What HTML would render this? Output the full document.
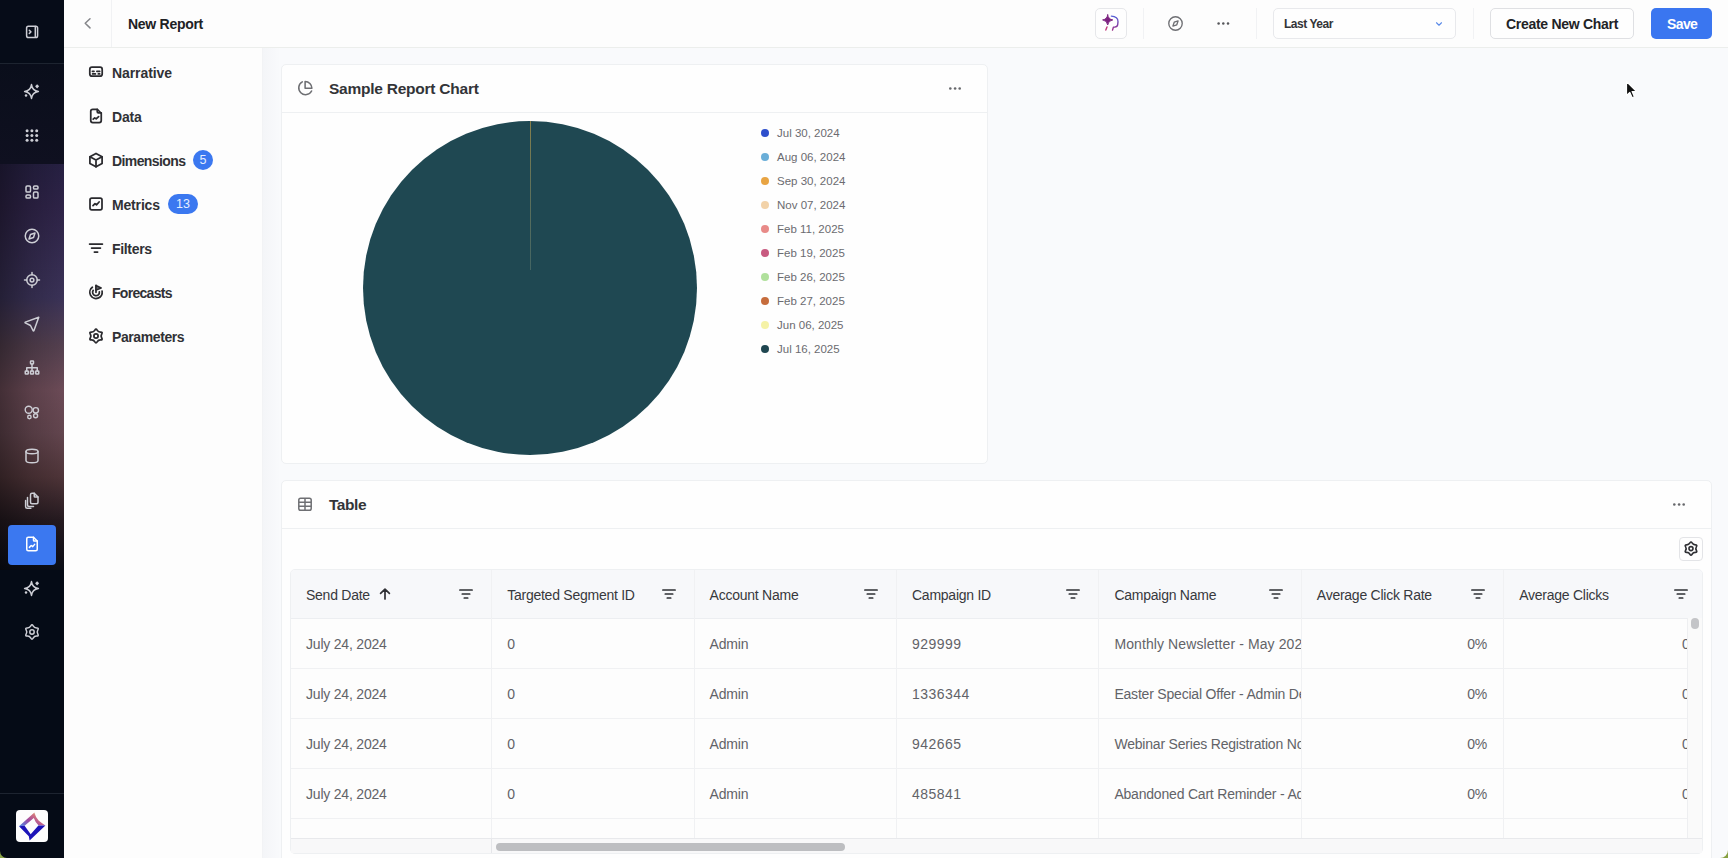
<!DOCTYPE html>
<html><head><meta charset="utf-8">
<style>
*{box-sizing:border-box;margin:0;padding:0}
html,body{width:1728px;height:858px;overflow:hidden}
body{position:relative;background:#f9fafc;font-family:"Liberation Sans",sans-serif;color:#222}
.abs{position:absolute}
svg{position:absolute;overflow:visible}
.sb{left:0;top:0;width:64px;height:858px;background:#050b16;overflow:hidden}
.sbi{fill:none;stroke:#cdced5;stroke-width:2;stroke-linecap:round;stroke-linejoin:round}
.pi{fill:none;stroke:#2a2a2e;stroke-width:1.75;stroke-linecap:round;stroke-linejoin:round}
.top{left:64px;top:0;width:1664px;height:48px;background:#fdfdfd;border-bottom:1px solid #eceeec}
.panel{left:64px;top:48px;width:199px;height:810px;background:#fdfdfd;border-right:1px solid #f2f3f5}
.item{position:absolute;left:48px;font-size:14px;font-weight:700;color:#303135;letter-spacing:-0.2px;white-space:nowrap}
.badge{position:absolute;height:20px;border-radius:10px;background:#3b78f0;color:#e6eeff;font-size:12.5px;text-align:center;line-height:20px}
.card{background:#fefefe;border:1px solid #eef0f2;border-radius:5px}
.t{position:absolute;white-space:nowrap}
.leg{position:absolute;left:777px;font-size:11.5px;color:#6b6b70;white-space:nowrap;letter-spacing:0px}
.dot{position:absolute;left:761px;width:8px;height:8px;border-radius:50%}
.hd{position:absolute;top:587px;font-size:14px;color:#38393d;white-space:nowrap;letter-spacing:-0.25px}
.cell{position:absolute;font-size:14px;color:#626368;white-space:nowrap;letter-spacing:-0.2px}
.fic{fill:none;stroke:#2f3034;stroke-width:1.7;stroke-linecap:round}
</style></head><body>

<!-- SIDEBAR -->
<div class="abs sb">
  <div class="abs" style="left:0;top:0;width:64px;height:63px;background:#060c18"></div>
  <div class="abs" style="left:0;top:63px;width:64px;height:1px;background:#1d2430"></div>
  <div class="abs" style="left:0;top:64px;width:64px;height:100px;background:linear-gradient(180deg,#0a0e1b,#0f1020)"></div>
  <div class="abs" style="left:0;top:164px;width:64px;height:406px;background:linear-gradient(90deg,rgba(0,0,0,0.38),rgba(0,0,0,0.15) 50%,rgba(0,0,0,0) 100%),linear-gradient(180deg,#262042 0%,#2e2347 10.6%,#3a3257 32.8%,#54404f 44.8%,#6c4b57 55.7%,#62454e 66.5%,#4e3438 77.1%,#251a20 87.7%,#0a0d16 100%)"></div>
  <div class="abs" style="left:0;top:793px;width:64px;height:1px;background:#1d2430"></div>

  <!-- sidebar icons -->
  <svg class="sbi" style="left:20px;top:20px;stroke-width:1.5" width="24" height="24" viewBox="20 20 24 24"><rect x="26.6" y="26.3" width="11" height="11.2" rx="1.8"/><path d="M35.3 26.5v10.8"/><path d="M29.3 30.3l1.6 1.6l-1.6 1.6"/></svg>
  <svg style="left:20px;top:80px" width="24" height="24" viewBox="20 80 24 24"><path d="M31.5 84.6 Q32.3 90.7 38.4 91.5 Q32.3 92.3 31.5 98.4 Q30.7 92.3 24.6 91.5 Q30.7 90.7 31.5 84.6Z" fill="none" stroke="#cdced5" stroke-width="1.5" stroke-linejoin="round"/><path d="M37.1 84.2 L39.1 86.3 L37.1 88.4 L35.1 86.3Z" fill="#cdced5"/><circle cx="26" cy="95.4" r="1.25" fill="#cdced5"/></svg>
  <svg style="left:20px;top:124px" width="24" height="24" viewBox="20 124 24 24" fill="#cdced5"><circle cx="27.1" cy="130.8" r="1.5"/><circle cx="31.9" cy="130.8" r="1.5"/><circle cx="36.7" cy="130.8" r="1.5"/><circle cx="27.1" cy="135.5" r="1.5"/><circle cx="31.9" cy="135.5" r="1.5"/><circle cx="36.7" cy="135.5" r="1.5"/><circle cx="27.1" cy="140.3" r="1.5"/><circle cx="31.9" cy="140.3" r="1.5"/><circle cx="36.7" cy="140.3" r="1.5"/></svg>
  <svg class="sbi" style="left:23px;top:183px" width="18" height="18" viewBox="0 0 24 24"><rect x="4" y="4" width="6" height="8" rx="1.5"/><rect x="4" y="16" width="6" height="4" rx="1.5"/><rect x="14" y="12" width="6" height="8" rx="1.5"/><rect x="14" y="4" width="6" height="4" rx="1.5"/></svg>
  <svg class="sbi" style="left:23px;top:227px" width="18" height="18" viewBox="0 0 24 24"><circle cx="12" cy="12" r="9"/><path d="M8 16l2 -6l6 -2l-2 6z"/></svg>
  <svg class="sbi" style="left:23px;top:271px" width="18" height="18" viewBox="0 0 24 24"><circle cx="12" cy="12" r="2.5"/><circle cx="12" cy="12" r="7"/><path d="M12 2v3M12 19v3M2 12h3M19 12h3"/></svg>
  <svg class="sbi" style="left:23px;top:315px" width="18" height="18" viewBox="0 0 24 24"><path d="M21 3l-6.5 18a.55 .55 0 0 1 -1 0l-3.5 -7l-7 -3.5a.55 .55 0 0 1 0 -1z"/></svg>
  <svg class="sbi" style="left:23px;top:359px" width="18" height="18" viewBox="0 0 24 24"><rect x="10" y="2.5" width="4" height="4" rx="0.8"/><rect x="3" y="16" width="4" height="4" rx="0.8"/><rect x="10" y="16" width="4" height="4" rx="0.8"/><rect x="17" y="16" width="4" height="4" rx="0.8"/><path d="M12 6.5v5M5 16v-4.5h14v4.5M12 11.5v4.5"/></svg>
  <svg class="sbi" style="left:20px;top:400px;stroke-width:1.4" width="24" height="24" viewBox="20 400 24 24"><circle cx="28.7" cy="409.8" r="3.5"/><circle cx="35.8" cy="410.3" r="2.7"/><circle cx="29.4" cy="417" r="1.7"/><circle cx="35.6" cy="415.8" r="2"/></svg>
  <svg class="sbi" style="left:23px;top:447px" width="18" height="18" viewBox="0 0 24 24"><ellipse cx="12" cy="6" rx="8" ry="3"/><path d="M4 6v12a8 3 0 0 0 16 0v-12"/></svg>
  <svg class="sbi" style="left:23px;top:491px" width="18" height="18" viewBox="0 0 24 24"><path d="M15 3v4a1 1 0 0 0 1 1h4"/><path d="M18 17h-6a2 2 0 0 1 -2 -2v-10a2 2 0 0 1 2 -2h3l5 5v7a2 2 0 0 1 -2 2z"/><path d="M14 20.5h-6a2 2 0 0 1 -2 -2v-10"/><path d="M10.5 23h-5a2 2 0 0 1 -2 -2v-8.5"/></svg>
  <div class="abs" style="left:8px;top:525px;width:48px;height:40px;background:#3b78f0;border-radius:4px"></div>
  <svg class="sbi" style="left:23px;top:535px;stroke:#fff" width="18" height="18" viewBox="0 0 24 24"><path d="M14 3v4a1 1 0 0 0 1 1h4"/><path d="M17 21h-10a2 2 0 0 1 -2 -2v-14a2 2 0 0 1 2 -2h7l5 5v11a2 2 0 0 1 -2 2z"/><path d="M8.5 16.5l2.5 -2.5l2 1.5l2.5 -3"/></svg>
  <svg style="left:20px;top:577px" width="24" height="24" viewBox="20 80 24 24"><path d="M31.5 84.6 Q32.3 90.7 38.4 91.5 Q32.3 92.3 31.5 98.4 Q30.7 92.3 24.6 91.5 Q30.7 90.7 31.5 84.6Z" fill="none" stroke="#cdced5" stroke-width="1.5" stroke-linejoin="round"/><path d="M37.1 84.2 L39.1 86.3 L37.1 88.4 L35.1 86.3Z" fill="#cdced5"/><circle cx="26" cy="95.4" r="1.25" fill="#cdced5"/></svg>
  <svg class="sbi" style="left:20px;top:620px;stroke-width:1.5" width="24" height="24" viewBox="20 620 24 24"><path d="M30.85 625.91 Q32.00 623.80 33.15 625.91 Q34.30 628.02 36.70 627.96 Q39.10 627.90 37.85 629.95 Q36.60 632.00 37.85 634.05 Q39.10 636.10 36.70 636.04 Q34.30 635.98 33.15 638.09 Q32.00 640.20 30.85 638.09 Q29.70 635.98 27.30 636.04 Q24.90 636.10 26.15 634.05 Q27.40 632.00 26.15 629.95 Q24.90 627.90 27.30 627.96 Q29.70 628.02 30.85 625.91Z"/><circle cx="32" cy="632" r="2.2"/></svg>
  <!-- logo -->
  <div class="abs" style="left:16px;top:810px;width:32px;height:32px;background:#fdfdfd;border-radius:4px"></div>
  <svg style="left:16px;top:810px" width="32" height="32" viewBox="0 0 32 32">
    <defs><linearGradient id="lg1" x1="0" y1="1" x2="1" y2="0.3"><stop offset="0" stop-color="#4a8ae8"/><stop offset="0.45" stop-color="#a04aa0"/><stop offset="0.75" stop-color="#d07080"/><stop offset="1" stop-color="#e8f080"/></linearGradient></defs>
    <path d="M3 16.2 L18.4 2.4 Q19.6 7.2 22.6 10.6 Q25.6 13.2 29.4 15.4 L22.4 15.2 Q19.4 12.4 17.8 7.9 L8.6 15.8 Z" fill="url(#lg1)"/>
    <path d="M3 16.2 L8.6 15.8 L14.7 24.2 L22.4 15.4 L29.4 15.6 L13.6 30.4 L12.8 26.2 Z" fill="#1c14b8"/>
  </svg>
</div>

<!-- TOP BAR -->
<div class="abs top"></div>
<div class="abs" style="left:111px;top:0;width:1px;height:47px;background:#f1f2f4"></div>
<svg style="left:80px;top:14px" width="16" height="18" viewBox="80 14 16 18" fill="none" stroke="#85868a" stroke-width="1.5" stroke-linecap="round" stroke-linejoin="round"><path d="M90 18.7L85.2 23.3L90 27.9"/></svg>
<div class="t" style="left:128px;top:16px;font-size:14px;font-weight:700;color:#202124;letter-spacing:-0.28px">New Report</div>
<!-- magic button -->
<div class="abs" style="left:1095px;top:8px;width:32px;height:31px;border:1px solid #e6e7ea;border-radius:5px;background:#fefefe"></div>
<svg style="left:1095px;top:8px" width="32" height="31" viewBox="1095 8 32 31" fill="none" stroke-linecap="round" stroke-linejoin="round">
  <defs><linearGradient id="hg" x1="0" y1="0" x2="0" y2="1"><stop offset="0" stop-color="#5560d8"/><stop offset="1" stop-color="#9a2f8a"/></linearGradient></defs>
  <path d="M1107.7 14.8 Q1108.3 19.3 1112.8 19.9 Q1108.3 20.5 1107.7 25 Q1107.1 20.5 1102.6 19.9 Q1107.1 19.3 1107.7 14.8Z" fill="#7c2280" stroke="#7c2280" stroke-width="0.9"/>
  <path d="M1111.4 16.1 C1115.6 16.2 1118.3 18.6 1118 21.6 L1117.7 24.6 Q1117.4 26.9 1114.6 27.1 L1113.4 27.3 L1112.5 30.1" stroke="url(#hg)" stroke-width="1.4"/>
  <path d="M1107 26.9 L1105.8 30.1" stroke="#c23a7c" stroke-width="1.4"/>
</svg>
<div class="abs" style="left:1143px;top:8px;width:1px;height:31px;background:#f1f2f4"></div>
<svg style="left:1167px;top:15px" width="17" height="17" viewBox="0 0 24 24" fill="none" stroke="#6e6f73" stroke-width="1.9" stroke-linecap="round" stroke-linejoin="round"><circle cx="12" cy="12" r="9.5"/><path d="M8.3 15.7l1.9 -5.5l5.5 -1.9l-1.9 5.5z"/></svg>
<svg style="left:1216px;top:21px" width="15" height="5" viewBox="0 0 15 5" fill="#55565a"><circle cx="2.6" cy="2.5" r="1.25"/><circle cx="7.3" cy="2.5" r="1.25"/><circle cx="12" cy="2.5" r="1.25"/></svg>
<div class="abs" style="left:1256px;top:8px;width:1px;height:31px;background:#f1f2f4"></div>
<!-- dropdown -->
<div class="abs" style="left:1273px;top:8px;width:183px;height:31px;border:1px solid #e8e9ec;border-radius:5px;background:#fefefe"></div>
<div class="t" style="left:1284px;top:17px;font-size:12px;font-weight:700;color:#333438;letter-spacing:-0.46px">Last Year</div>
<svg style="left:1434px;top:19px" width="10" height="10" viewBox="0 0 24 24" fill="none" stroke="#5a8ae8" stroke-width="2.6" stroke-linecap="round" stroke-linejoin="round"><path d="M6 9l6 6l6 -6"/></svg>
<div class="abs" style="left:1473px;top:8px;width:1px;height:31px;background:#f1f2f4"></div>
<!-- buttons -->
<div class="abs" style="left:1490px;top:8px;width:144px;height:31px;border:1px solid #dfe0e3;border-radius:5px;background:#fefefe"></div>
<div class="t" style="left:1506px;top:16px;font-size:14px;font-weight:700;color:#222326;letter-spacing:-0.29px">Create New Chart</div>
<div class="abs" style="left:1651px;top:8px;width:61px;height:31px;border-radius:5px;background:#3a76f0"></div>
<div class="t" style="left:1667px;top:16px;font-size:14px;font-weight:700;color:#fff;letter-spacing:-0.6px">Save</div>

<!-- LEFT PANEL -->
<div class="abs panel">
  <svg class="pi" style="left:22px;top:12px" width="20" height="24" viewBox="86 60 20 24"><rect x="89.8" y="67.2" width="12.4" height="9" rx="2.2"/><path d="M92.4 71.3h1.6M96.9 71.3h2.8M92.6 73.9h2.8M98.3 73.9h1.4"/></svg>
  <div class="item" style="top:17px;letter-spacing:-0.09px">Narrative</div>
  <svg class="pi" style="left:22px;top:56px" width="20" height="24" viewBox="86 104 20 24"><path d="M90.75 111.25a2 2 0 0 1 2 -2h4.5l4 4v7.25a2 2 0 0 1 -2 2h-6.5a2 2 0 0 1 -2 -2z"/><path d="M97.25 109.25v2.5a1 1 0 0 0 1 1h3"/><path d="M93.2 119.2l1.5 -1.3l1.5 0.9l2.4 -2.1"/></svg>
  <div class="item" style="top:61px;letter-spacing:-0.17px">Data</div>
  <svg class="pi" style="left:22px;top:100px" width="20" height="24" viewBox="86 148 20 24"><path d="M96 153.4l6.1 3.4v6.6l-6.1 3.4l-6.1 -3.4v-6.6z"/><path d="M96 160.1l6.1 -3.3M96 160.1v6.7M96 160.1l-6.1 -3.3"/></svg>
  <div class="item" style="top:105px;letter-spacing:-0.6px">Dimensions</div>
  <div class="badge" style="left:129px;top:102px;width:20px">5</div>
  <svg class="pi" style="left:22px;top:144px" width="20" height="24" viewBox="86 192 20 24"><rect x="90" y="198" width="12" height="11.8" rx="1.8"/><path d="M93 205.6l2 -2l1.5 1.2l2.6 -2.8"/></svg>
  <div class="item" style="top:149px;letter-spacing:-0.17px">Metrics</div>
  <div class="badge" style="left:104px;top:146px;width:30px">13</div>
  <svg class="pi" style="left:22px;top:188px" width="20" height="24" viewBox="86 236 20 24"><path d="M89.6 244h12.8M91.6 248h8.8M94.4 252h3.2"/></svg>
  <div class="item" style="top:193px;letter-spacing:-0.33px">Filters</div>
  <svg class="pi" style="left:22px;top:232px" width="20" height="24" viewBox="86 280 20 24"><path d="M92.36 287.28A6.2 6.2 0 1 0 102.1 291.2"/><path d="M93.21 290.35A3.4 3.4 0 1 0 99.36 291.77"/><path d="M96 292.3V285.4"/><path d="M96 285.5L101.2 288L96 290.1Z" fill="#6a6a6e" stroke-width="1.5"/></svg>
  <div class="item" style="top:237px;letter-spacing:-0.7px">Forecasts</div>
  <svg class="pi" style="left:22px;top:276px" width="20" height="24" viewBox="86 324 20 24"><path d="M94.88 330.05 Q96.00 328.00 97.12 330.05 Q98.25 332.10 100.59 332.05 Q102.93 332.00 101.71 334.00 Q100.50 336.00 101.71 338.00 Q102.93 340.00 100.59 339.95 Q98.25 339.90 97.12 341.95 Q96.00 344.00 94.88 341.95 Q93.75 339.90 91.41 339.95 Q89.07 340.00 90.29 338.00 Q91.50 336.00 90.29 334.00 Q89.07 332.00 91.41 332.05 Q93.75 332.10 94.88 330.05Z"/><circle cx="96" cy="336" r="2.1"/></svg>
  <div class="item" style="top:281px;letter-spacing:-0.41px">Parameters</div>
</div>
</div>

<div class="abs" style="left:263px;top:48px;width:18px;height:810px;background:linear-gradient(90deg,rgba(30,40,80,0.025),rgba(30,40,80,0))"></div>
<!-- CHART CARD -->
<div class="abs card" style="left:281px;top:64px;width:707px;height:400px"></div>
<div class="abs" style="left:282px;top:112px;width:705px;height:1px;background:#eef0f2"></div>
<svg style="left:292px;top:76px" width="26" height="24" viewBox="0 0 26 24" fill="none" stroke="#6e6f73" stroke-width="1.55" stroke-linecap="round" stroke-linejoin="round"><path d="M10.3 5.9A6.8 6.8 0 1 0 19.6 15.0"/><path d="M13.1 5.5V12.3H19.9A6.8 6.8 0 0 0 13.1 5.5Z"/></svg>
<div class="t" style="left:329px;top:80px;font-size:15.5px;font-weight:700;color:#333438;letter-spacing:-0.24px">Sample Report Chart</div>
<svg style="left:948px;top:86px" width="15" height="5" viewBox="0 0 15 5" fill="#66676b"><circle cx="2.3" cy="2.5" r="1.3"/><circle cx="7.1" cy="2.5" r="1.3"/><circle cx="11.7" cy="2.5" r="1.3"/></svg>
<div class="abs" style="left:363px;top:121px;width:334px;height:334px;border-radius:50%;background:#1f4852"></div>
<div class="abs" style="left:530px;top:121px;width:1px;height:149px;background:linear-gradient(180deg,#9a8a4a,#6f7a5a 40%,#4a6a66 100%);opacity:0.85"></div>
<div class="dot" style="top:129px;background:#2e4fcc"></div><div class="leg" style="top:127px">Jul 30, 2024</div>
<div class="dot" style="top:153px;background:#6aaed8"></div><div class="leg" style="top:151px">Aug 06, 2024</div>
<div class="dot" style="top:177px;background:#e8a443"></div><div class="leg" style="top:175px">Sep 30, 2024</div>
<div class="dot" style="top:201px;background:#f2d2a8"></div><div class="leg" style="top:199px">Nov 07, 2024</div>
<div class="dot" style="top:225px;background:#e88a88"></div><div class="leg" style="top:223px">Feb 11, 2025</div>
<div class="dot" style="top:249px;background:#c85a80"></div><div class="leg" style="top:247px">Feb 19, 2025</div>
<div class="dot" style="top:273px;background:#b0e09c"></div><div class="leg" style="top:271px">Feb 26, 2025</div>
<div class="dot" style="top:297px;background:#c66c3c"></div><div class="leg" style="top:295px">Feb 27, 2025</div>
<div class="dot" style="top:321px;background:#f5f2a6"></div><div class="leg" style="top:319px">Jun 06, 2025</div>
<div class="dot" style="top:345px;background:#1f4650"></div><div class="leg" style="top:343px">Jul 16, 2025</div>

<!-- TABLE CARD -->
<div class="abs card" style="left:281px;top:480px;width:1431px;height:390px"></div>
<div class="abs" style="left:282px;top:528px;width:1429px;height:1px;background:#eef0f2"></div>
<svg style="left:297px;top:496px" width="16" height="16" viewBox="0 0 16 16" fill="none" stroke="#6e6f73" stroke-width="1.5" stroke-linejoin="round"><rect x="1.8" y="2.2" width="12.4" height="12" rx="1.8"/><path d="M1.8 6.2h12.4M1.8 10.2h12.4M8 2.2v12"/></svg>
<div class="t" style="left:329px;top:496px;font-size:15.5px;font-weight:700;color:#333438;letter-spacing:-0.45px">Table</div>
<svg style="left:1672px;top:502px" width="15" height="5" viewBox="0 0 15 5" fill="#66676b"><circle cx="2.3" cy="2.5" r="1.3"/><circle cx="7.1" cy="2.5" r="1.3"/><circle cx="11.7" cy="2.5" r="1.3"/></svg>
<div class="abs" style="left:1679px;top:537px;width:24px;height:24px;border:1px solid #e3e4e7;border-radius:4px;background:#fefefe"></div>
<svg style="left:1679px;top:537px" width="24" height="24" viewBox="1679 537 24 24" fill="none" stroke="#2f3034" stroke-width="1.6" stroke-linejoin="round"><path d="M1689.92 542.94 Q1691.00 541.00 1692.08 542.94 Q1693.15 544.88 1695.37 544.84 Q1697.58 544.80 1696.44 546.70 Q1695.30 548.60 1696.44 550.50 Q1697.58 552.40 1695.37 552.36 Q1693.15 552.32 1692.08 554.26 Q1691.00 556.20 1689.92 554.26 Q1688.85 552.32 1686.63 552.36 Q1684.42 552.40 1685.56 550.50 Q1686.70 548.60 1685.56 546.70 Q1684.42 544.80 1686.63 544.84 Q1688.85 544.88 1689.92 542.94Z"/><circle cx="1691" cy="548.6" r="2"/></svg>
<!-- grid -->
<div class="abs" style="left:290px;top:569px;width:1413px;height:285px;border:1px solid #eef0f2;border-radius:5px;background:#fdfdfd;overflow:hidden">
  <div class="abs" style="left:0;top:0;width:1413px;height:49px;background:#f7f8fa;border-bottom:1px solid #eceef1"></div>
</div>
<div class="hd" style="left:306.0px">Send Date</div>
<svg class="fic" style="left:459.2px;top:583px" width="14" height="18" viewBox="0 0 14 18"><path d="M0.9 7h12.2M3.3 11h7.4M5.3 15h3.4"/></svg>
<div class="hd" style="left:507.2px">Targeted Segment ID</div>
<svg class="fic" style="left:661.6px;top:583px" width="14" height="18" viewBox="0 0 14 18"><path d="M0.9 7h12.2M3.3 11h7.4M5.3 15h3.4"/></svg>
<div class="abs" style="left:491.2px;top:570px;width:1px;height:268px;background:#f0f1f3"></div>
<div class="hd" style="left:709.6px">Account Name</div>
<svg class="fic" style="left:864.0px;top:583px" width="14" height="18" viewBox="0 0 14 18"><path d="M0.9 7h12.2M3.3 11h7.4M5.3 15h3.4"/></svg>
<div class="abs" style="left:693.6px;top:570px;width:1px;height:268px;background:#f0f1f3"></div>
<div class="hd" style="left:912.0px">Campaign ID</div>
<svg class="fic" style="left:1066.4px;top:583px" width="14" height="18" viewBox="0 0 14 18"><path d="M0.9 7h12.2M3.3 11h7.4M5.3 15h3.4"/></svg>
<div class="abs" style="left:896.0px;top:570px;width:1px;height:268px;background:#f0f1f3"></div>
<div class="hd" style="left:1114.4px">Campaign Name</div>
<svg class="fic" style="left:1268.8px;top:583px" width="14" height="18" viewBox="0 0 14 18"><path d="M0.9 7h12.2M3.3 11h7.4M5.3 15h3.4"/></svg>
<div class="abs" style="left:1098.4px;top:570px;width:1px;height:268px;background:#f0f1f3"></div>
<div class="hd" style="left:1316.8px">Average Click Rate</div>
<svg class="fic" style="left:1471.2px;top:583px" width="14" height="18" viewBox="0 0 14 18"><path d="M0.9 7h12.2M3.3 11h7.4M5.3 15h3.4"/></svg>
<div class="abs" style="left:1300.8px;top:570px;width:1px;height:268px;background:#f0f1f3"></div>
<div class="hd" style="left:1519.2px">Average Clicks</div>
<svg class="fic" style="left:1673.6px;top:583px" width="14" height="18" viewBox="0 0 14 18"><path d="M0.9 7h12.2M3.3 11h7.4M5.3 15h3.4"/></svg>
<div class="abs" style="left:1503.2px;top:570px;width:1px;height:268px;background:#f0f1f3"></div>
<svg style="left:378px;top:588px" width="14" height="12" viewBox="0 0 14 12" fill="none" stroke="#2f3034" stroke-width="1.7" stroke-linecap="round" stroke-linejoin="round"><path d="M7 11V1.2M2.6 5.4L7 1.2L11.4 5.4"/></svg>
<div class="cell" style="left:306px;top:636px">July 24, 2024</div>
<div class="cell" style="left:507.2px;top:636px">0</div>
<div class="cell" style="left:709.6px;top:636px">Admin</div>
<div class="cell" style="left:912.0px;top:636px;letter-spacing:0.45px">929999</div>
<div class="abs" style="left:1114.4px;top:634px;width:186.4px;height:20px;overflow:hidden"><div class="cell" style="left:0;top:2px;letter-spacing:0.1px">Monthly Newsletter - May 2024</div></div>
<div class="cell" style="left:1400px;top:636px;width:87px;text-align:right">0%</div>
<div class="abs" style="left:1660px;top:634px;width:27px;height:20px;overflow:hidden"><div class="cell" style="left:22px;top:2px">0</div></div>
<div class="abs" style="left:291px;top:668px;width:1396px;height:1px;background:#f0f1f3"></div>
<div class="cell" style="left:306px;top:686px">July 24, 2024</div>
<div class="cell" style="left:507.2px;top:686px">0</div>
<div class="cell" style="left:709.6px;top:686px">Admin</div>
<div class="cell" style="left:912.0px;top:686px;letter-spacing:0.45px">1336344</div>
<div class="abs" style="left:1114.4px;top:684px;width:186.4px;height:20px;overflow:hidden"><div class="cell" style="left:0;top:2px;letter-spacing:-0.2px">Easter Special Offer - Admin Demo</div></div>
<div class="cell" style="left:1400px;top:686px;width:87px;text-align:right">0%</div>
<div class="abs" style="left:1660px;top:684px;width:27px;height:20px;overflow:hidden"><div class="cell" style="left:22px;top:2px">0</div></div>
<div class="abs" style="left:291px;top:718px;width:1396px;height:1px;background:#f0f1f3"></div>
<div class="cell" style="left:306px;top:736px">July 24, 2024</div>
<div class="cell" style="left:507.2px;top:736px">0</div>
<div class="cell" style="left:709.6px;top:736px">Admin</div>
<div class="cell" style="left:912.0px;top:736px;letter-spacing:0.45px">942665</div>
<div class="abs" style="left:1114.4px;top:734px;width:186.4px;height:20px;overflow:hidden"><div class="cell" style="left:0;top:2px;letter-spacing:-0.2px">Webinar Series Registration Now</div></div>
<div class="cell" style="left:1400px;top:736px;width:87px;text-align:right">0%</div>
<div class="abs" style="left:1660px;top:734px;width:27px;height:20px;overflow:hidden"><div class="cell" style="left:22px;top:2px">0</div></div>
<div class="abs" style="left:291px;top:768px;width:1396px;height:1px;background:#f0f1f3"></div>
<div class="cell" style="left:306px;top:786px">July 24, 2024</div>
<div class="cell" style="left:507.2px;top:786px">0</div>
<div class="cell" style="left:709.6px;top:786px">Admin</div>
<div class="cell" style="left:912.0px;top:786px;letter-spacing:0.45px">485841</div>
<div class="abs" style="left:1114.4px;top:784px;width:186.4px;height:20px;overflow:hidden"><div class="cell" style="left:0;top:2px;letter-spacing:-0.2px">Abandoned Cart Reminder - Admin</div></div>
<div class="cell" style="left:1400px;top:786px;width:87px;text-align:right">0%</div>
<div class="abs" style="left:1660px;top:784px;width:27px;height:20px;overflow:hidden"><div class="cell" style="left:22px;top:2px">0</div></div>
<div class="abs" style="left:291px;top:818px;width:1396px;height:1px;background:#f0f1f3"></div>
<div class="abs" style="left:1687px;top:618px;width:15px;height:221px;background:#fafafa;border-left:1px solid #eeeff1"></div>
<div class="abs" style="left:1691px;top:618px;width:8px;height:11px;border-radius:4px;background:#c4c5c8"></div>
<div class="abs" style="left:291px;top:838px;width:1411px;height:15px;background:#f8f8f9;border-top:1px solid #e8e9ec"></div>
<div class="abs" style="left:491px;top:839px;width:1px;height:14px;background:#e5e6e9"></div>
<div class="abs" style="left:496px;top:843px;width:349px;height:8px;border-radius:4px;background:#bdbec1"></div>

<svg style="left:1625px;top:80px" width="14" height="20" viewBox="0 0 14 20"><path d="M1.5 1.5 L1.5 15.5 L4.8 12.4 L7.2 17.8 L9.4 16.8 L7.1 11.6 L11.6 11.6 Z" fill="#111" stroke="#fff" stroke-width="1.2" stroke-linejoin="round"/></svg>
<svg style="left:0;top:848px" width="10" height="10" viewBox="0 848 10 10"><path d="M0 851 A7 7 0 0 0 7 858 L0 858 Z" fill="#8ba448"/></svg>
<svg style="left:1718px;top:848px" width="10" height="10" viewBox="1718 848 10 10"><path d="M1728 850 A8 8 0 0 1 1720 858 L1728 858 Z" fill="#86a040"/></svg>
</body></html>
